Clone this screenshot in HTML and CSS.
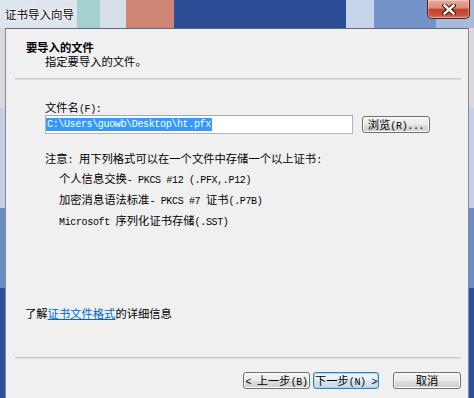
FILE: index.html
```html
<!DOCTYPE html>
<html lang="zh-CN">
<head>
  <meta charset="UTF-8">
  <title>证书导入向导</title>
  <link rel="stylesheet" href="styles.css">
</head>
<body>
  <div class="window">
    <div class="titlebar">
      <span class="title">证书导入向导</span>
      <button class="close" title="关闭">
        <svg width="14" height="11" viewBox="0 0 14 11">
          <path d="M2.5 1.5 L11.5 9.5 M11.5 1.5 L2.5 9.5" stroke="#3b0d08" stroke-width="4.4" stroke-linecap="square"/>
          <path d="M2.5 1.5 L11.5 9.5 M11.5 1.5 L2.5 9.5" stroke="#fff" stroke-width="2.4" stroke-linecap="square"/>
        </svg>
      </button>
    </div>

    <div class="frame">
      <div class="content">
        <!-- 向导页标题 -->
        <div class="header">
          <div class="h-title">要导入的文件</div>
          <div class="h-sub">指定要导入的文件。</div>
        </div>
        <div class="sep"></div>

        <div class="main">
          <div class="label">文件名<span class="m">(F):</span></div>
          <div class="file-row">
            <div class="input"><span class="sel m">C:\Users\guowb\Desktop\ht.pfx</span></div>
            <button class="btn browse">浏览<span class="m">(R)...</span></button>
          </div>
          <div class="note">注意<span class="m">: </span>用下列格式可以在一个文件中存储一个以上证书<span class="m">:</span></div>
          <ul class="formats">
            <li>个人信息交换<span class="m">- PKCS #12 (.PFX,.P12)</span></li>
            <li>加密消息语法标准<span class="m">- PKCS #7 </span>证书<span class="m">(.P7B)</span></li>
            <li><span class="m">Microsoft </span>序列化证书存储<span class="m">(.SST)</span></li>
          </ul>
        </div>

        <div class="more">了解<a href="#">证书文件格式</a>的详细信息</div>
        <div class="sep"></div>

        <!-- 底部按钮 -->
        <div class="buttons">
          <button class="btn back"><span class="m">&lt; </span>上一步<span class="m">(B)</span></button>
          <button class="btn next">下一步<span class="m">(N) &gt;</span></button>
          <button class="btn cancel">取消</button>
        </div>
      </div>
    </div>
  </div>
</body>
</html>
```

FILE: styles.css
```css
* { box-sizing:border-box; }
body { margin:0; width:474px; height:398px; overflow:hidden; font-family:"Noto Sans CJK SC", sans-serif; font-size:11.3px; color:#000; }
.m { font-family:"Liberation Mono", monospace; font-size:10px; letter-spacing:-0.35px; line-height:1; }

/* Aero 玻璃边框（色带用 inset 阴影叠出） */
.window { height:398px; display:flex; flex-direction:column; background:#7f97c6; }
.titlebar { height:28px; flex:none; display:flex; align-items:flex-start; padding-left:5px; background:#dde4ec;
  box-shadow:inset -38px 0 0 #a6badc, inset -100px 0 0 #7392c8, inset -128px 0 0 #c6d4ea, inset -300px 0 0 #2b4d95,
    inset -348px 0 0 #cf8573, inset -374px 0 0 #d6dfe9, inset -397px 0 0 #a4d0d0; }
.title { line-height:28px; font-size:11.5px; text-shadow:0 0 5px #fff, 0 0 3px #fff, 0 0 2px #fff; }
.close { margin-left:auto; margin-right:4px; width:43px; height:19px; padding:0; border:1px solid #5b1c15; border-top:none; border-radius:0 0 5px 5px;
  background:linear-gradient(#e7ab9f 0, #d98a7a 45%, #c4412d 52%, #cd5438 85%, #dc7d5e 100%);
  box-shadow:inset 0 0 0 1px rgba(255,255,255,.35); display:flex; align-items:center; justify-content:center; }
.frame { flex:1; display:flex; padding:0 5px; background:#2c4f9c;
  box-shadow:inset 0 80px 0 #dcd6dd, inset 0 180px 0 #c5cfe0, inset 0 260px 0 #6f8cc2; }

/* 内容区 */
.content { flex:1; display:flex; flex-direction:column; background:#f0f0f0; border:1px solid #7d8ca3; border-top-color:#5f6b7e; border-bottom:none; padding-bottom:9px; }
.header { padding:11px 0 0 20px; line-height:14px; }
.h-title { font-weight:bold; }
.h-sub { padding-left:19px; }
.sep { height:2px; flex:none; margin:10px 7px 0 9px; border-top:1px solid #cacaca; border-bottom:1px solid #dedede; }

.main { flex:1; padding-left:39px; line-height:14px; }
.label { margin-top:20px; height:14px; }
.file-row { display:flex; align-items:center; margin-top:1px; }
.input { width:308px; height:19px; background:#fff; border:1px solid #abb5c4; border-top-color:#a3aab5; padding:2px 0 0 0; line-height:13px; }
.sel { display:inline-block; background:#3399ff; color:#fff; padding:0 1px; height:13px; line-height:13px; vertical-align:top; }
.note { margin-top:17px; height:14px; }
.formats { list-style:none; margin:3px 0 0; padding-left:14px; }
.formats li { height:21px; line-height:21px; }

.more { padding-left:19px; line-height:14px; height:14px; }
.more a { color:#0066cc; }
.more + .sep { margin-top:37px; }

/* 按钮 */
.btn { font-family:inherit; font-size:11.3px; color:#000; height:17px; line-height:15px; padding:0; border:1px solid #707070; border-radius:3px;
  background:linear-gradient(#f2f2f2 0, #ebebeb 50%, #dddddd 51%, #cfcfcf 100%); box-shadow:inset 0 0 0 1px #fbfbfb; }
.browse { width:68px; margin-left:9px; }
.buttons { display:flex; justify-content:flex-end; margin:13px 7px 0 0; }
.back { width:67px; }
.next { width:66px; margin-left:3px; border-color:#3c7fb1; box-shadow:inset 0 0 0 1px #9fd8f6;
  background:linear-gradient(#f1f7fb 0, #e6eff6 50%, #d6e3ee 51%, #cad9e6 100%); }
.cancel { width:68px; margin-left:14px; }
```
